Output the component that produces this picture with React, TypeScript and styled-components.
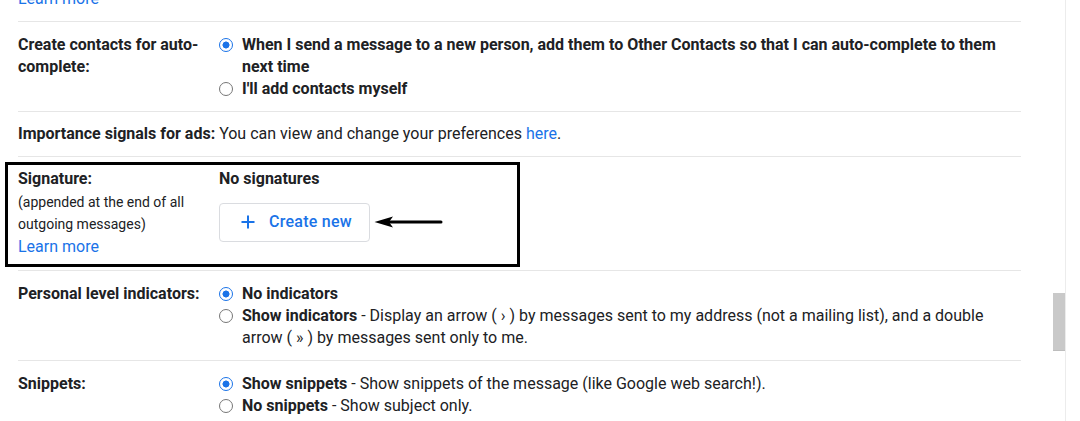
import React from "react";
import styled, { createGlobalStyle } from "styled-components";

const GlobalStyle = createGlobalStyle`
  html, body { margin: 0; padding: 0; background: #fff; overflow: hidden; }
  body {
    font-family: Roboto, "Noto Sans", Arial, sans-serif;
    font-size: 16px;
    color: #202124;
  }
`;

const Page = styled.div`
  display: flex;
  width: 1080px;
  height: 421px;
  overflow: hidden;
`;

const Main = styled.div`
  flex: none;
  width: 1003px;
  margin-left: 18px;
`;

const ScrollTrack = styled.div`
  flex: none;
  width: 12px;
  height: 421px;
  margin-left: 32px;
  border-right: 1px solid #ececec;
`;

const Thumb = styled.div`
  height: 57px;
  margin-top: 293px;
  background: #c9c9c9;
  border-bottom: 1px solid #bdbdbd;
`;

const Row = styled.div<{ $pt?: number; $pb?: number; $lh?: number }>`
  position: relative;
  display: flex;
  padding: ${(p) => p.$pt ?? 12}px 0 ${(p) => p.$pb ?? 11}px;
  border-bottom: 1px solid #e6e6e6;
  line-height: ${(p) => p.$lh ?? 22}px;
`;

const Remnant = styled(Row)`
  margin-top: -12px;
  padding-top: 0;
`;

const Label = styled.div`
  flex: none;
  width: 186px;
  padding-right: 15px;
  font-weight: 700;
`;

const Note = styled.div`
  font-size: 14px;
  font-weight: 400;
`;

const Value = styled.div`
  flex: 1;
  min-width: 0;
`;

const Option = styled.label`
  display: grid;
  grid-template-columns: 23px 1fr;
  align-items: start;
  font-weight: 700;
`;

const Radio = styled.input.attrs({ type: "radio" })`
  appearance: none;
  box-sizing: border-box;
  width: 14px;
  height: 14px;
  margin: 4px 0 0 0;
  border: 1px solid #767676;
  border-radius: 50%;
  background: #fff;

  &:checked {
    border: 1.5px solid #1a73e8;
    background: radial-gradient(circle, #1a73e8 0 3.2px, #fff 3.8px);
  }
`;

const Desc = styled.span`
  font-weight: 400;
`;

const Link = styled.a`
  color: #1a73e8;
  text-decoration: none;
  font-weight: 400;
`;

const Strong = styled.span`
  font-weight: 700;
`;

const ButtonRow = styled.div`
  display: flex;
  align-items: center;
  margin-top: 12px;
`;

const CreateButton = styled.button`
  display: inline-flex;
  align-items: center;
  gap: 14px;
  height: 39px;
  padding: 0 17px 1px 21px;
  background: #fff;
  border: 1px solid #dadce0;
  border-radius: 4px;
  color: #1a73e8;
  font-family: Roboto, "Noto Sans", Arial, sans-serif;
  font-size: 16px;
  font-weight: 500;
  letter-spacing: 0.25px;
`;

const Highlight = styled.div`
  position: absolute;
  left: -13px;
  top: 5px;
  width: 509px;
  height: 99px;
  border: 3px solid #000;
  pointer-events: none;
`;

const ArrowSvg = styled.svg`
  flex: none;
  margin-left: 4px;
`;

const Plus = () => (
  <svg width="14" height="14" viewBox="0 0 14 14">
    <path d="M7 0.5v13M0.5 7h13" stroke="#1a73e8" strokeWidth="2" fill="none" />
  </svg>
);

const Arrow = () => (
  <ArrowSvg width="70" height="14" viewBox="0 0 70 14">
    <path d="M14 7H67" stroke="#000" strokeWidth="3" strokeLinecap="round" />
    <path d="M0.5 7L19 1.5L15 7L19 12.5Z" fill="#000" />
  </ArrowSvg>
);

export default function App() {
  return (
    <>
      <GlobalStyle />
      <Page>
        <Main>
          <Remnant>
            <Link href="#">Learn more</Link>
          </Remnant>

          <Row>
            <Label>Create contacts for auto-complete:</Label>
            <Value>
              <Option>
                <Radio name="contacts" defaultChecked />
                <span>
                  When I send a message to a new person, add them to Other
                  Contacts so that I can auto-complete to them next time
                </span>
              </Option>
              <Option>
                <Radio name="contacts" />
                <span>I'll add contacts myself</span>
              </Option>
            </Value>
          </Row>

          <Row $pt={11} $pb={11}>
            <span>
              <Strong>Importance signals for ads:</Strong> You can view and
              change your preferences <Link href="#">here</Link>.
            </span>
          </Row>

          <Row $pt={11} $pb={12} $lh={22.5}>
            <Highlight />
            <Label>
              Signature:
              <Note>(appended at the end of all outgoing messages)</Note>
              <Link href="#">Learn more</Link>
            </Label>
            <Value>
              <Strong>No signatures</Strong>
              <ButtonRow>
                <CreateButton>
                  <Plus />
                  Create new
                </CreateButton>
                <Arrow />
              </ButtonRow>
            </Value>
          </Row>

          <Row>
            <Label>Personal level indicators:</Label>
            <Value>
              <Option>
                <Radio name="pli" defaultChecked />
                <span>No indicators</span>
              </Option>
              <Option>
                <Radio name="pli" />
                <span>
                  Show indicators
                  <Desc>
                    {" "}
                    - Display an arrow ( › ) by messages sent to my address (not
                    a mailing list), and a double arrow ( » ) by messages sent
                    only to me.
                  </Desc>
                </span>
              </Option>
            </Value>
          </Row>

          <Row>
            <Label>Snippets:</Label>
            <Value>
              <Option>
                <Radio name="snip" defaultChecked />
                <span>
                  Show snippets
                  <Desc> - Show snippets of the message (like Google web search!).</Desc>
                </span>
              </Option>
              <Option>
                <Radio name="snip" />
                <span>
                  No snippets<Desc> - Show subject only.</Desc>
                </span>
              </Option>
            </Value>
          </Row>
        </Main>
        <ScrollTrack>
          <Thumb />
        </ScrollTrack>
      </Page>
    </>
  );
}
